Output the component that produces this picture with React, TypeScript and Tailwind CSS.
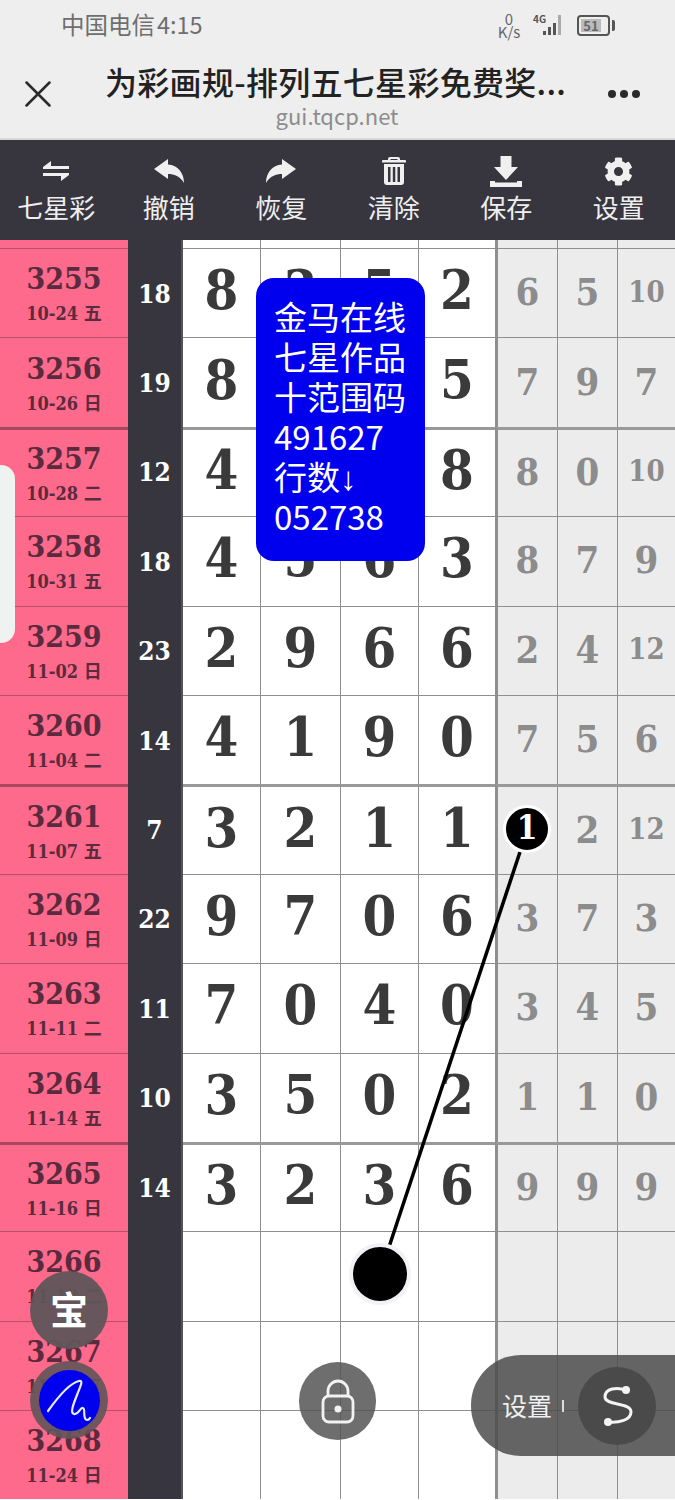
import React from "react";
import { FaCog } from "react-icons/fa";

const serif = "font-['DejaVu_Serif','Noto_Sans_CJK_SC',serif] [font-stretch:condensed]";
const cjk = "font-['Noto_Sans_CJK_SC','Noto_Sans',sans-serif] [font-stretch:normal]";

type Row = { id: string; date: string; sum: string; main: string[]; miss: string[] };
const rows: Row[] = [
  { id: "3255", date: "10-24 五", sum: "18", main: ["8", "3", "5", "2"], miss: ["6", "5", "10"] },
  { id: "3256", date: "10-26 日", sum: "19", main: ["8", "3", "3", "5"], miss: ["7", "9", "7"] },
  { id: "3257", date: "10-28 二", sum: "12", main: ["4", "0", "0", "8"], miss: ["8", "0", "10"] },
  { id: "3258", date: "10-31 五", sum: "18", main: ["4", "5", "6", "3"], miss: ["8", "7", "9"] },
  { id: "3259", date: "11-02 日", sum: "23", main: ["2", "9", "6", "6"], miss: ["2", "4", "12"] },
  { id: "3260", date: "11-04 二", sum: "14", main: ["4", "1", "9", "0"], miss: ["7", "5", "6"] },
  { id: "3261", date: "11-07 五", sum: "7", main: ["3", "2", "1", "1"], miss: ["", "2", "12"] },
  { id: "3262", date: "11-09 日", sum: "22", main: ["9", "7", "0", "6"], miss: ["3", "7", "3"] },
  { id: "3263", date: "11-11 二", sum: "11", main: ["7", "0", "4", "0"], miss: ["3", "4", "5"] },
  { id: "3264", date: "11-14 五", sum: "10", main: ["3", "5", "0", "2"], miss: ["1", "1", "0"] },
  { id: "3265", date: "11-16 日", sum: "14", main: ["3", "2", "3", "6"], miss: ["9", "9", "9"] },
  { id: "3266", date: "11-18 二", sum: "", main: ["", "", "", ""], miss: ["", "", ""] },
  { id: "3267", date: "11-21 五", sum: "", main: ["", "", "", ""], miss: ["", "", ""] },
  { id: "3268", date: "11-24 日", sum: "", main: ["", "", "", ""], miss: ["", "", ""] },
];

const thick = new Set(["3257", "3261", "3265"]);

function Swap() {
  return (
    <svg width="28" height="22" viewBox="0 0 28 22" fill="#f0f0f0">
      <path d="M9 1 L1 7 L1 9 H27 V6 H9 Z" />
      <path d="M19 21 L27 15 L27 13 H1 V16 H19 Z" />
    </svg>
  );
}
function Reply() {
  return (
    <svg width="30" height="24" viewBox="0 0 30 24" fill="#f0f0f0">
      <path d="M0 10 L14 0 V5.500 C24 6 30 14 30 24 C26 17 20 15 14 15 V20 Z" />
    </svg>
  );
}
function Share() {
  return (
    <svg width="30" height="24" viewBox="0 0 30 24" fill="#f0f0f0">
      <path d="M30 10 L16 0 V5.500 C6 6 0 14 0 24 C4 17 10 15 16 15 V20 Z" />
    </svg>
  );
}
function Trash() {
  return (
    <svg width="24" height="28" viewBox="0 0 24 28" fill="#f0f0f0">
      <path fillRule="evenodd" d="M8 0h8a2 2 0 0 1 2 2v1h5a1 1 0 0 1 1 1v1.500H0V4a1 1 0 0 1 1-1h5V2a2 2 0 0 1 2-2zM8.500 2v1h7V2z" />
      <path fillRule="evenodd" d="M2 7h20v18a3 3 0 0 1-3 3H5a3 3 0 0 1-3-3zM6 10v15h2.500V10zM10.800 10v15h2.500V10zM15.500 10v15h2.500V10z" />
    </svg>
  );
}
function Save() {
  return (
    <svg width="32" height="31" viewBox="0 0 32 31" fill="#f0f0f0">
      <path d="M10.500 0h11v11H28L16 24 4 11h6.500z" />
      <path d="M0 25h5v1.500h22V25h5v6H0z" />
    </svg>
  );
}

const tools: [React.ReactNode, string][] = [
  [<Swap />, "七星彩"],
  [<Reply />, "撤销"],
  [<Share />, "恢复"],
  [<Trash />, "清除"],
  [<Save />, "保存"],
  [<FaCog size={29} color="#f0f0f0" />, "设置"],
];

const v = "border-r border-r-[#8f8f8f]";

function Cells({ r, rowLine }: { r: { main: string[]; miss: string[] }; rowLine: string }) {
  return (
    <>
      <div className={`flex w-[312px] shrink-0 bg-white ${rowLine}`}>
        {r.main.map((d, i) => (
          <div
            key={i}
            className={`flex items-center justify-center pb-[6px] text-[54px] leading-none font-bold text-[#3a3a3a] ${
              i === 0 ? `w-[78px] ${v}` : i === 1 ? `w-[80px] ${v}` : i === 2 ? `w-[78px] ${v}` : "flex-1"
            }`}
          >
            {d}
          </div>
        ))}
      </div>
      <div className={`flex flex-1 bg-[#ececec] border-l-[3px] border-l-[#8f8f8f] ${rowLine}`}>
        {r.miss.map((d, i) => (
          <div
            key={i}
            className={`flex items-center justify-center pb-[2px] font-bold text-[#8c8c8c] ${d.length > 1 ? "text-[29px]" : "text-[38px]"} leading-none ${
              i === 0 ? `w-[60px] ${v}` : i === 1 ? `w-[60px] ${v}` : "flex-1"
            }`}
          >
            {d}
          </div>
        ))}
      </div>
    </>
  );
}

function GridRow({ r }: { r: Row }) {
  const t = thick.has(r.id);
  const line = t ? "border-t-[3px] border-t-[#999]" : "border-t border-t-[#8f8f8f]";
  const pinkLine = t ? "border-t-[3px] border-t-[#a8485f]" : "border-t border-t-[#b8506a]";
  return (
    <div className="flex h-[89.4px] shrink-0">
      <div className={`w-[128px] shrink-0 bg-[#fd6a8b] flex flex-col items-center justify-center text-[#5a2a3e] font-bold ${pinkLine}`}>
        <div className="text-[30px] leading-[36px] mt-[1px]">{r.id}</div>
        <div className="text-[18px] leading-[24px] mt-[5px]">{r.date}</div>
      </div>
      <div className="w-[55px] shrink-0 bg-[#37363f] flex items-center justify-center pt-[3px] text-[26px] font-bold text-white border-r-2 border-r-[#555]">
        {r.sum}
      </div>
      <Cells r={r} rowLine={line} />
    </div>
  );
}

export default function App() {
  return (
    <div className={`relative w-[675px] h-[1500px] overflow-hidden bg-white ${serif}`}>
      <div className={`h-[138px] bg-[#eeeeee] ${cjk}`}>
        <div className="flex items-center h-[50px] pl-[61px] pr-[60px] justify-between">
          <div className="flex text-[23.500px] leading-none text-[#6e6e6e]">
            <span>中国电信</span>
            <span className="ml-[2px]">4:15</span>
          </div>
          <div className="flex items-center text-[#666]">
            <div className="text-[15px] leading-[13px] text-center w-[26px]">
              0<br />K/s
            </div>
            <svg width="36" height="24" viewBox="0 0 36 24" className="ml-[11px]">
              <text x="0" y="10" fontSize="10" fontWeight="700" fill="#555">4G</text>
              <rect x="10" y="18" width="3" height="4" fill="#555" />
              <rect x="15" y="14" width="3" height="8" fill="#555" />
              <rect x="20" y="10" width="3" height="12" fill="#555" />
              <rect x="25" y="2" width="3" height="20" fill="#aaa" />
            </svg>
            <div className="ml-[8px] flex items-center">
              <div className="w-[33px] h-[21px] rounded-[4px] border-2 border-[#555] flex items-center pl-[2px]">
                <div className="bg-[#bbb] h-[13px] w-[20px] text-[13px] leading-[13px] font-bold text-[#666] text-center">51</div>
              </div>
              <div className="w-[3px] h-[11px] bg-[#555] ml-[2px] rounded-r-[2px]" />
            </div>
          </div>
        </div>
        <div className="flex items-start pt-[10px]">
          <svg width="26" height="26" viewBox="0 0 26 26" className="ml-[25px] mt-[21px] shrink-0" stroke="#2a2a2a" strokeWidth="2.500" strokeLinecap="round">
            <path d="M1.500 1.500 L24.500 24.500 M24.500 1.500 L1.500 24.500" />
          </svg>
          <div className="ml-[54px] w-[480px]">
            <div className="text-[32px] leading-[42px] font-medium tracking-[0.3px] text-[#222] whitespace-nowrap">为彩画规-排列五七星彩免费奖...</div>
            <div className="text-[22px] leading-[26px] text-[#8c8c8c] text-center w-[464px]">gui.tqcp.net</div>
          </div>
          <div className="flex gap-[4px] ml-[23px] mt-[30px]">
            <div className="w-[8px] h-[8px] rounded-full bg-[#2a2a2a]" />
            <div className="w-[8px] h-[8px] rounded-full bg-[#2a2a2a]" />
            <div className="w-[8px] h-[8px] rounded-full bg-[#2a2a2a]" />
          </div>
        </div>
      </div>
      <div className={`h-[102px] bg-[#37363f] border-t-2 border-t-[#d8d8d8] grid grid-cols-6 ${cjk}`}>
        {tools.map(([ic, label], i) => (
          <div key={i} className="flex flex-col items-center">
            <div className="h-[30px] mt-[16px] flex items-center justify-center">{ic}</div>
            <div className="text-[26px] leading-[34px] text-[#eee] mt-[4px]">{label}</div>
          </div>
        ))}
      </div>
      <div className="flex h-[8px]">
        <div className="w-[128px] shrink-0 bg-[#fd6a8b]" />
        <div className="w-[55px] shrink-0 bg-[#37363f] border-r-2 border-r-[#555]" />
        <Cells r={{ main: ["", "", "", ""], miss: ["", "", ""] }} rowLine="" />
      </div>
      {rows.map((r) => (
        <GridRow key={r.id} r={r} />
      ))}

      {/* note */}
      <div className={`absolute left-[256px] top-[278px] w-[169px] h-[283px] rounded-[18px] bg-[#0000ee] text-white pl-[18px] pt-[18px] text-[33px] leading-[40px] ${cjk}`}>
        <div>金马在线</div>
        <div>七星作品</div>
        <div>十范围码</div>
        <div>491627</div>
        <div className="h-[40px]">
          行数<span className="font-['Liberation_Serif',serif] text-[33px] leading-[20px]">↓</span>
        </div>
        <div>052738</div>
      </div>

      {/* left tab */}
      <div className="absolute left-0 top-[465px] w-[15px] h-[178px] bg-[#eef2f1] rounded-r-[14px]" />

      {/* line */}
      <svg className="absolute left-0 top-0 pointer-events-none" width="675" height="1500">
        <line x1="520" y1="852" x2="388" y2="1250" stroke="#000" strokeWidth="3.500" />
      </svg>
      <div className="absolute left-[503px] top-[805px] w-[48px] h-[48px] rounded-full bg-black border-[3px] border-white flex items-center justify-center pb-[3px] text-white font-bold text-[33px] leading-none">
        1
      </div>
      <div className="absolute left-[349px] top-[1243px] w-[62px] h-[62px] rounded-full bg-black border-[4px] border-[#f2f2f6]" />

      {/* floating */}
      <div className={`absolute left-[30px] top-[1271px] w-[78px] h-[78px] rounded-full bg-[#5f5558]/95 flex items-center justify-center pb-[6px] text-white text-[38px] font-bold ${cjk}`}>
        宝
      </div>
      <div className="absolute left-[30px] top-[1361px] w-[78px] h-[78px] rounded-full bg-[#5f5558]/90 flex items-center justify-center">
        <div className="w-[61px] h-[61px] rounded-full bg-[#0000ee] flex items-center justify-center">
          <svg width="46" height="46" viewBox="0 0 46 46" fill="none" stroke="#e8ecff" strokeWidth="2.200" strokeLinecap="round" strokeLinejoin="round">
            <path d="M2 34 C12 20 24 6 33 4 C38 3 34 10 31 18 C27 28 24 36 28 37 C33 38 34 30 37 31 C40 32 36 42 41 43 C43 43 44 41 44 41" />
          </svg>
        </div>
      </div>
      <div className="absolute left-[299px] top-[1362px] w-[77px] h-[78px] rounded-full bg-[#555]/85 flex items-center justify-center">
        <svg width="34" height="46" viewBox="0 0 34 46" fill="none" stroke="#f2f2f2" strokeWidth="2.800">
          <rect x="2" y="18" width="30" height="26" rx="6" />
          <path d="M7 18 V13 a10 10 0 0 1 20 0 V18" />
          <circle cx="17" cy="31" r="3.500" fill="#f2f2f2" stroke="none" />
        </svg>
      </div>
      <div className={`absolute left-[471px] top-[1355px] w-[260px] h-[101px] rounded-[50px] bg-[#4c4c4c]/85 flex items-center ${cjk}`}>
        <div className="ml-[31px] text-[25px] leading-none text-[#f0f0f0]">设置</div>
        <div className="ml-[10px] w-[2px] h-[12px] bg-[#ddd]" />
        <div className="ml-[14px] w-[78px] h-[78px] rounded-full bg-[#4a4a4a] flex items-center justify-center">
          <svg width="36" height="48" viewBox="0 0 36 48" fill="none" stroke="#f4f4f4" strokeWidth="3" strokeLinecap="round">
            <path d="M27 8 C18 5 6 6 6 15 C6 24 32 20 32 30 C32 38 20 41 9 40" />
            <circle cx="27" cy="8" r="4" fill="#f4f4f4" stroke="none" />
            <circle cx="9" cy="40" r="4" fill="#f4f4f4" stroke="none" />
          </svg>
        </div>
      </div>
    </div>
  );
}
